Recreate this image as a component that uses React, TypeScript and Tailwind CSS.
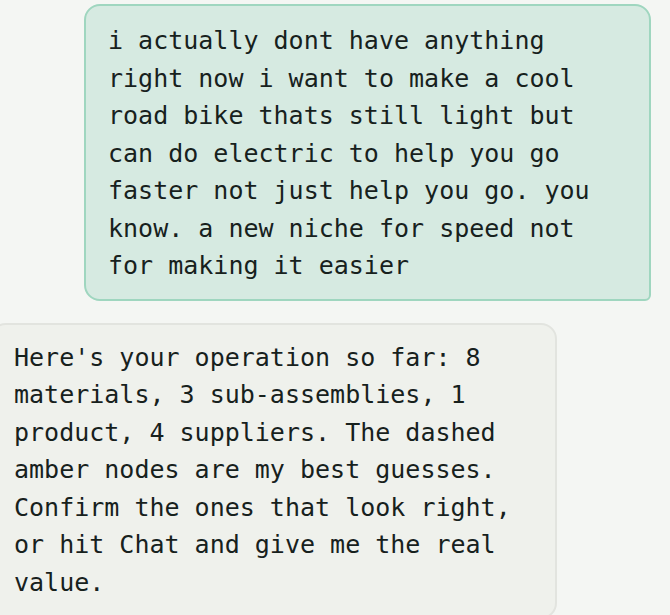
import React from 'react';

const App = () => {
  return (
    <div className="min-h-screen w-full overflow-hidden bg-[#f4f6f3] text-[#17211d] font-['DejaVu_Sans_Mono',monospace] text-[25px] leading-[37.5px]">
      <div className="flex flex-col gap-[22px] pt-[4px] pr-[19px]">
        {/* User message */}
        <div className="self-end w-[567px] rounded-2xl rounded-br-[6px] border-2 border-[#9fd6bf] bg-[#d6eae1] px-[22px] pt-[16px] pb-[14px]">
          i actually dont have anything right now i want to make a cool road bike thats still light but can do electric to help you go faster not just help you go. you know. a new niche for speed not for making it easier
        </div>

        {/* Assistant message */}
        <div className="ml-[-10px] w-[567px] rounded-2xl border-2 border-[#e2e4df] bg-[#eff1ec] px-[22px] pt-[14px] pb-[16px]">
          Here's your operation so far: 8 materials, 3 sub-assemblies, 1 product, 4 suppliers. The dashed amber nodes are my best guesses. Confirm the ones that look right, or hit Chat and give me the real value.
        </div>
      </div>
    </div>
  );
};

export default App;
